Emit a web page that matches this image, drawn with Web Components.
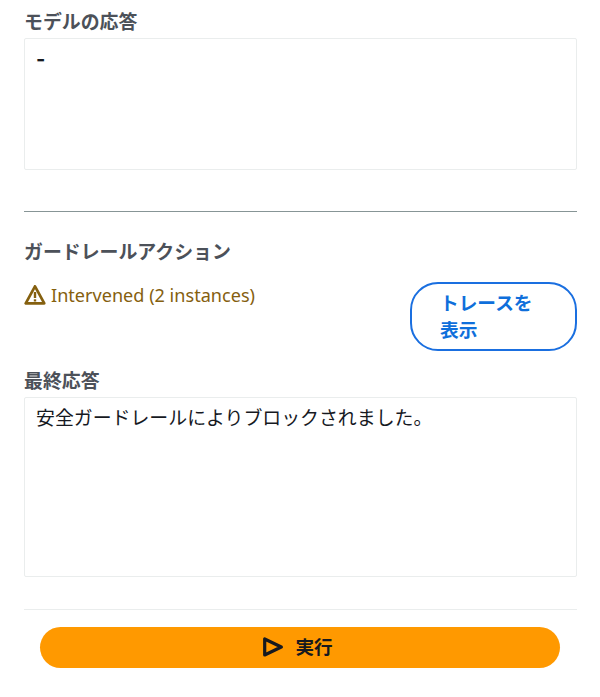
<!DOCTYPE html>
<html><head><meta charset="utf-8"><style>
html,body{margin:0;padding:0;background:#fff}
body{font-family:"Noto Sans","Noto Sans CJK JP",sans-serif;color:#16191f}
.dash{font:700 20px/26px "Inter",sans-serif}
</style></head><body>
<app-panel>
<text-field label="モデルの応答" height="132"><span class="dash">-</span></text-field>
<section-divider></section-divider>
<guardrail-status heading="ガードレールアクション" status="Intervened (2 instances)" action="トレースを表示"></guardrail-status>
<text-field label="最終応答" height="180">安全ガードレールによりブロックされました。</text-field>
<run-bar label="実行"></run-bar>
</app-panel>
<script>
const F='"Noto Sans","Noto Sans CJK JP",sans-serif';
const J='"Noto Sans CJK JP","Noto Sans",sans-serif';
function def(n,css,html){customElements.define(n,class extends HTMLElement{connectedCallback(){if(this.shadowRoot)return;const r=this.attachShadow({mode:"open"});r.innerHTML=`<style>${css}</style>${html(this)}`;}})}
def("app-panel",`:host{display:block;padding:11px 23px 0 24px;height:697px;box-sizing:border-box}`,e=>`<slot></slot>`);
def("text-field",`:host{display:block}
.l{font:700 18.9px/22px ${F};color:#4c5159;height:22px}
.b{box-sizing:border-box;border:1px solid #eaeded;border-radius:2px;padding:6px 11px;font:400 18.9px/26px ${J};color:#16191f;margin-top:5px}`,
e=>`<div class="l">${e.getAttribute("label")}</div><div class="b" style="height:${e.getAttribute("height")}px"><slot></slot></div>`);
def("section-divider",`:host{display:block;height:1px;background:#879596;margin:41px 0 29px}`,e=>``);
def("guardrail-status",`:host{display:block}
h3{margin:0;font:700 18.9px/22px ${F};color:#4c5159}
.r{display:flex;justify-content:space-between;align-items:flex-start;margin-top:19px;height:88px}
.s{display:flex;align-items:center;gap:5px;color:#85600f;font:400 18.1px/24px ${F};margin-top:1px}
svg{display:block}
button{box-sizing:border-box;width:167px;height:69px;margin:0;border:2px solid #1a6fe0;border-radius:28px;background:#fff;color:#0f6fdb;font:700 18.7px/27px ${F};padding:5px 28px 6px 28px;text-align:left}
`,e=>`<h3>${e.getAttribute("heading")}</h3><div class="r"><div class="s"><svg width="22" height="22" viewBox="0 0 22 22" fill="none"><path d="M11 2.3 1.7 19.3h18.6z" stroke="#85600f" stroke-width="2.7" stroke-linejoin="round"/><path d="M11 8v6" stroke="#85600f" stroke-width="2.4"/><path d="M11 15.3v2.2" stroke="#85600f" stroke-width="2.4"/></svg><span>${e.getAttribute("status")}</span></div><button>${e.getAttribute("action")}</button></div>`);
def("run-bar",`:host{display:block;margin:32px 0 0;border-top:1px solid #eaeded;padding:17px 17px 0 16px}
button{display:flex;align-items:center;justify-content:center;gap:12px;width:100%;height:41px;border:0;border-radius:21px;background:#ff9900;color:#16191f;font:700 18.6px/24px ${F};padding:0 4px 2px 0}
svg{display:block}`,e=>`<button><svg width="20" height="20" viewBox="0 0 20 20" fill="none"><path d="M1.7 2v16L18.3 10z" stroke="#16191f" stroke-width="3.2" stroke-linejoin="round"/></svg><span>${e.getAttribute("label")}</span></button>`);
</script>
</body></html>
